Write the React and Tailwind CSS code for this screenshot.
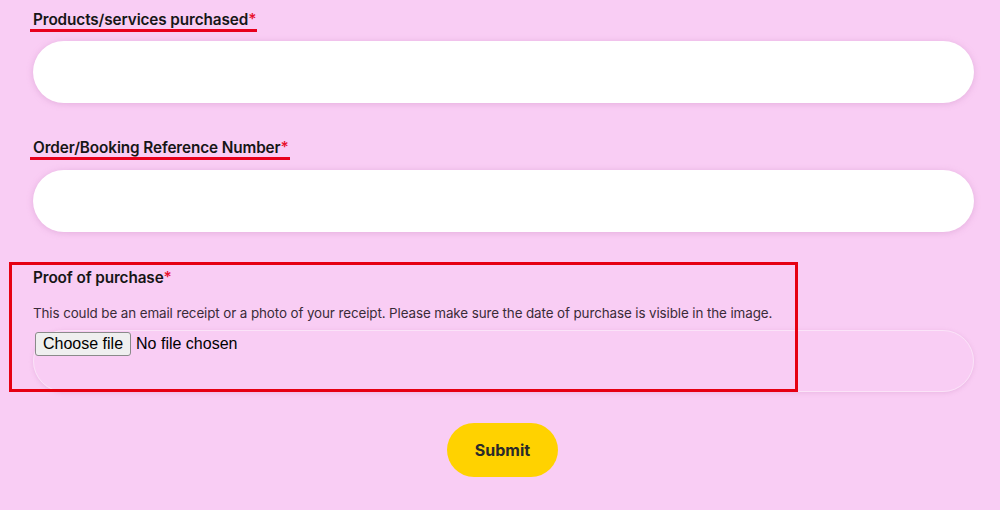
import { useState } from 'react'

function Label({ children, marked }) {
  return (
    <span
      className={
        'block w-fit text-[15.3px] leading-[19px] font-semibold text-[#161616] tracking-[-0.1px] ' +
        (marked ? 'border-b-[3px] border-[#e8001c] -ml-[3px] pl-[3px] pr-[1px]' : '')
      }
    >
      {children}
      <span className="text-[#e8112d]">*</span>
    </span>
  )
}

function TextField() {
  return (
    <input
      type="text"
      className="block w-full h-[62px] rounded-full bg-white px-6 outline-none shadow-[0_1px_6px_rgba(190,120,180,0.35)]"
    />
  )
}

export default function App() {
  const [file, setFile] = useState(null)

  return (
    <div className="min-h-[510px] w-full bg-[#f9cdf4] pl-[33px] pr-[26px] pt-[10px] font-['Inter',sans-serif]">
      <Label marked>Products/services purchased</Label>
      <div className="mt-[9px]">
        <TextField />
      </div>

      <div className="mt-[35px]">
        <Label marked>Order/Booking Reference Number</Label>
      </div>
      <div className="mt-[10px]">
        <TextField />
      </div>

      <div className="relative mt-[36px]">
        {/* red annotation box */}
        <div className="absolute -left-[24px] -top-[6px] w-[789px] h-[130px] border-[3px] border-[#e60012] pointer-events-none z-10" />
        <Label>Proof of purchase</Label>
        <p className="mt-[16px] text-[13.4px] leading-[20px] text-[#3a2b38] tracking-[-0.1px]">
          This could be an email receipt or a photo of your receipt. Please make sure the date of purchase is visible in the image.
        </p>
        <div className="mt-[7px] h-[62px] rounded-full border border-[#fbe3f8] shadow-[0_1px_4px_rgba(190,120,180,0.25)]">
          <label className="flex items-center gap-[5px] pt-[1px] font-['Liberation_Sans',sans-serif] text-[16px] text-black cursor-pointer">
            <span className="ml-[1px] bg-[#efefef] border border-[#8a8a8a] rounded-[3px] px-[7px] h-[24px] leading-[22px]">
              Choose file
            </span>
            <span>{file ? file.name : 'No file chosen'}</span>
            <input
              type="file"
              className="hidden"
              onChange={e => setFile(e.target.files[0] || null)}
            />
          </label>
        </div>
      </div>

      <div className="flex justify-center mt-[31px] -ml-[2px]">
        <button className="w-[111px] h-[54px] rounded-full bg-[#ffd200] text-[16px] font-bold text-[#2a2a2a]">
          Submit
        </button>
      </div>
    </div>
  )
}
